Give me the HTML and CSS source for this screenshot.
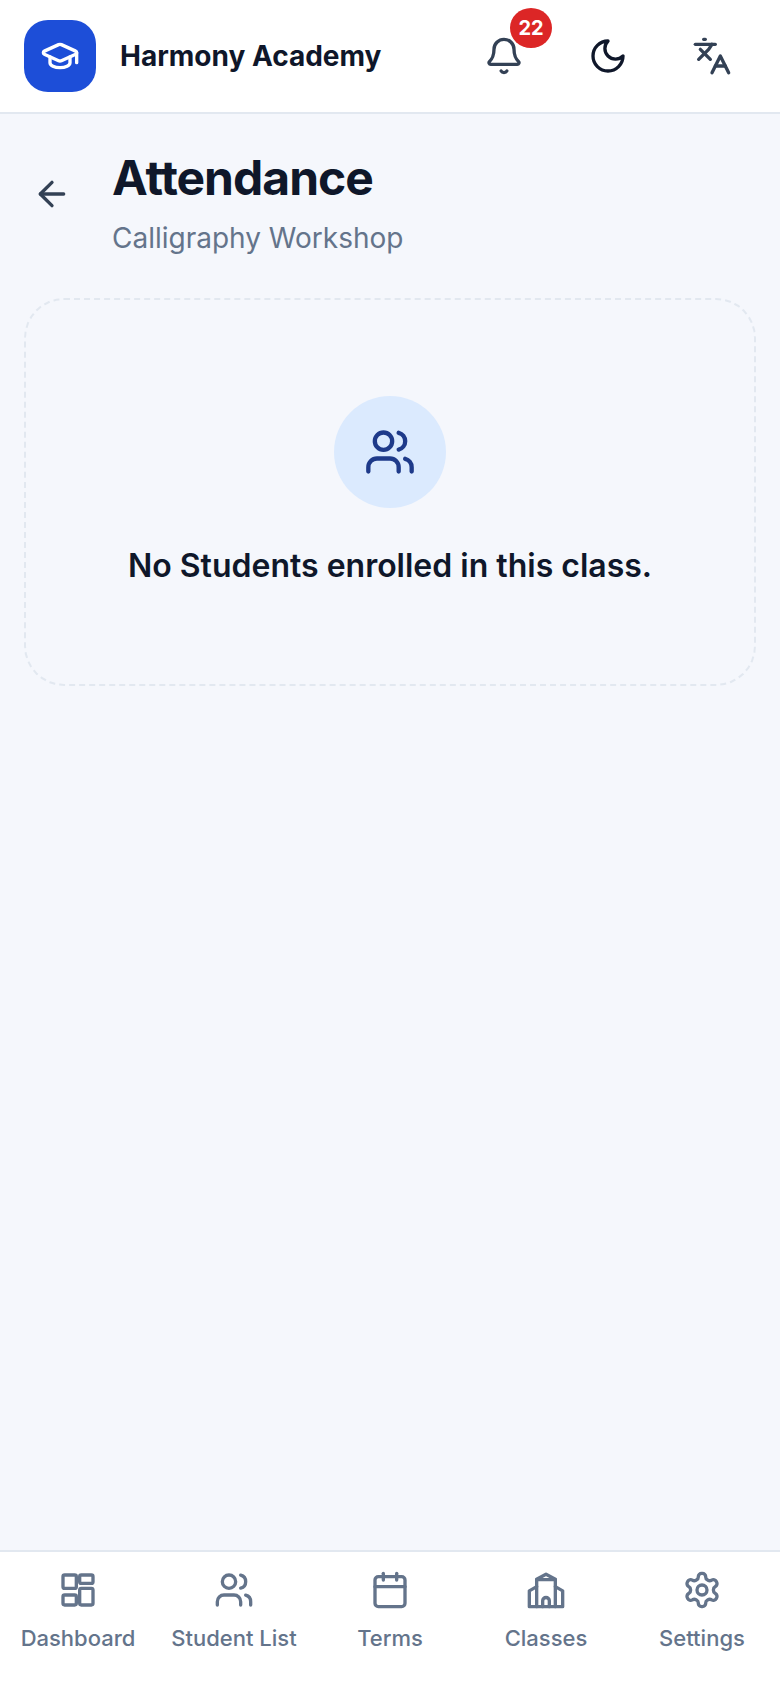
FILE: index.html
```html
<!DOCTYPE html>
<html lang="en">
<head>
<meta charset="utf-8">
<title>Attendance</title>
<link rel="stylesheet" href="styles.css">
</head>
<body>
<div class="app">
  <header class="topbar">
    <div class="brand">
      <div class="logo">
        <svg viewBox="0 0 24 24" width="40" height="40" class="ico" stroke="#fff" stroke-width="2"><path d="M21.42 10.92a1 1 0 0 0-.02-1.84l-8.57-3.9a2 2 0 0 0-1.66 0l-8.57 3.9a1 1 0 0 0 0 1.83l8.57 3.91a2 2 0 0 0 1.66 0z"/><path d="M22 10v6"/><path d="M6 12.5V16a6 3 0 0 0 12 0v-3.5"/></svg>
      </div>
      <span class="brand-name">Harmony Academy</span>
    </div>
    <div class="actions">
      <button class="action">
        <svg viewBox="0 0 24 24" width="40" height="40" class="ico slate" stroke-width="2"><path d="M10.27 21a2 2 0 0 0 3.46 0"/><path d="M3.26 15.33A1 1 0 0 0 4 17h16a1 1 0 0 0 .74-1.67C19.41 13.96 18 12.5 18 8A6 6 0 0 0 6 8c0 4.5-1.41 5.96-2.74 7.33"/></svg>
        <span class="badge">22</span>
      </button>
      <button class="action">
        <svg viewBox="0 0 24 24" width="40" height="40" class="ico dark" stroke-width="2"><path d="M12 3a6 6 0 0 0 9 9 9 9 0 1 1-9-9Z"/></svg>
      </button>
      <button class="action">
        <svg viewBox="0 0 24 24" width="40" height="40" class="ico slate" stroke-width="2"><path d="m5 8 6 6"/><path d="m4 14 6-6 2-3"/><path d="M2 5h12"/><path d="M7 2h1"/><path d="m22 22-5-10-5 10"/><path d="M14 18h6"/></svg>
      </button>
    </div>
  </header>

  <main class="content">
    <div class="page-head">
      <button class="back">
        <svg viewBox="0 0 24 24" width="40" height="40" class="ico slate" stroke-width="2"><path d="m12 19-7-7 7-7"/><path d="M19 12H5"/></svg>
      </button>
      <div class="titles">
        <h1>Attendance</h1>
        <p>Calligraphy Workshop</p>
      </div>
    </div>
    <section class="empty">
      <div class="empty-icon">
        <svg viewBox="0 0 24 24" width="52" height="52" class="ico navy" stroke-width="2"><path d="M16 21v-2a4 4 0 0 0-4-4H6a4 4 0 0 0-4 4v2"/><circle cx="9" cy="7" r="4"/><path d="M16 3.13a4 4 0 0 1 0 7.75"/><path d="M22 21v-2a4 4 0 0 0-3-3.87"/></svg>
      </div>
      <p class="empty-text">No Students enrolled in this class.</p>
    </section>
  </main>

  <nav class="tabs">
    <a class="tab">
      <svg viewBox="0 0 24 24" width="40" height="40" class="ico" stroke-width="2"><rect x="3" y="3" width="8" height="8" rx="1"/><rect x="13" y="3" width="8" height="5" rx="1"/><rect x="13" y="11" width="8" height="10" rx="1"/><rect x="3" y="15" width="8" height="6" rx="1"/></svg>
      <span>Dashboard</span>
    </a>
    <a class="tab">
      <svg viewBox="0 0 24 24" width="40" height="40" class="ico" stroke-width="2"><path d="M16 21v-2a4 4 0 0 0-4-4H6a4 4 0 0 0-4 4v2"/><circle cx="9" cy="7" r="4"/><path d="M16 3.13a4 4 0 0 1 0 7.75"/><path d="M22 21v-2a4 4 0 0 0-3-3.87"/></svg>
      <span>Student List</span>
    </a>
    <a class="tab">
      <svg viewBox="0 0 24 24" width="40" height="40" class="ico" stroke-width="2"><path d="M8 2v4"/><path d="M16 2v4"/><rect x="3" y="4" width="18" height="18" rx="2"/><path d="M3 10h18"/></svg>
      <span>Terms</span>
    </a>
    <a class="tab">
      <svg viewBox="0 0 24 24" width="40" height="40" class="ico" stroke-width="2"><path d="M6.4 22V5.5L12 2.5l5.6 3V22"/><path d="M6.4 5.8h11.2"/><path d="M6.4 10 2 12.5V22h20v-9.5L17.6 10"/><path d="M10 22v-3.5a2 2 0 0 1 4 0V22"/></svg>
      <span>Classes</span>
    </a>
    <a class="tab">
      <svg viewBox="0 0 24 24" width="40" height="40" class="ico" stroke-width="2"><path d="M12.22 2h-.44a2 2 0 0 0-2 2v.18a2 2 0 0 1-1 1.73l-.43.25a2 2 0 0 1-2 0l-.15-.08a2 2 0 0 0-2.73.73l-.22.38a2 2 0 0 0 .73 2.73l.15.1a2 2 0 0 1 1 1.72v.51a2 2 0 0 1-1 1.74l-.15.09a2 2 0 0 0-.73 2.73l.22.38a2 2 0 0 0 2.73.73l.15-.08a2 2 0 0 1 2 0l.43.25a2 2 0 0 1 1 1.73V20a2 2 0 0 0 2 2h.44a2 2 0 0 0 2-2v-.18a2 2 0 0 1 1-1.73l.43-.25a2 2 0 0 1 2 0l.15.08a2 2 0 0 0 2.73-.73l.22-.39a2 2 0 0 0-.73-2.73l-.15-.08a2 2 0 0 1-1-1.74v-.5a2 2 0 0 1 1-1.74l.15-.09a2 2 0 0 0 .73-2.73l-.22-.38a2 2 0 0 0-2.73-.73l-.15.08a2 2 0 0 1-2 0l-.43-.25a2 2 0 0 1-1-1.73V4a2 2 0 0 0-2-2z"/><circle cx="12" cy="12" r="3"/></svg>
      <span>Settings</span>
    </a>
  </nav>
</div>
</body>
</html>
```

FILE: styles.css
```css
* { box-sizing: border-box; }
html, body { margin: 0; height: 100%; }
body {
  font-family: Inter, "Liberation Sans", sans-serif;
  background: #f5f7fc;
  color: #0f172a;
}
.app { display: flex; flex-direction: column; height: 1688px; overflow: hidden; }
.ico { fill: none; stroke-linecap: round; stroke-linejoin: round; display: block; }
.slate { stroke: #334155; }
.dark { stroke: #0f172a; }
.navy { stroke: #1e3a8a; }

.topbar {
  height: 114px;
  flex: none;
  background: #fff;
  border-bottom: 2px solid #e2e8f0;
  display: flex;
  align-items: center;
  justify-content: space-between;
  padding: 0 24px;
}
.brand { display: flex; align-items: center; gap: 24px; }
.logo {
  width: 72px; height: 72px;
  border-radius: 24px;
  background: #1d4ed8;
  display: flex; align-items: center; justify-content: center;
}
.brand-name { font-size: 28px; font-weight: 700; color: #0f172a; }
.actions { display: flex; align-items: center; gap: 24px; margin-right: 4px; }
.action {
  position: relative;
  width: 80px; height: 80px;
  background: none; border: 0; padding: 0;
  display: flex; align-items: center; justify-content: center;
}
.badge {
  position: absolute;
  top: -8px; right: -8px;
  width: 42px; height: 40px;
  border-radius: 50%;
  background: #dc2626;
  color: #fff;
  font-family: Inter, sans-serif;
  font-size: 20px; font-weight: 700;
  display: flex; align-items: center; justify-content: center;
}

.content { flex: 1; padding: 36px 24px 0; }
.page-head { display: flex; align-items: flex-start; gap: 32px; }
.back {
  width: 56px; height: 56px;
  background: none; border: 0; padding: 0;
  margin-top: 16px;
  display: flex; align-items: center; justify-content: center;
}
.titles h1 {
  margin: 0;
  font-size: 48px; line-height: 56px; font-weight: 700;
  letter-spacing: -1px;
  color: #0f172a;
}
.titles p {
  margin: 12px 0 0;
  font-size: 28px; line-height: 40px;
  color: #64748b;
}
.empty {
  margin-top: 40px;
  height: 388px;
  border: 2px dashed #e2e8f0;
  border-radius: 40px;
  display: flex; flex-direction: column; align-items: center;
  padding-top: 96px;
}
.empty-icon {
  width: 112px; height: 112px;
  border-radius: 50%;
  background: #dbeafe;
  display: flex; align-items: center; justify-content: center;
}
.empty-text {
  margin: 34px 0 0;
  font-size: 32px; line-height: 48px; font-weight: 600;
  color: #0f172a;
}

.tabs {
  flex: none;
  height: 138px;
  background: #fff;
  border-top: 2px solid #e2e8f0;
  display: grid;
  grid-template-columns: repeat(5, 1fr);
  padding: 18px 0 0;
}
.tab {
  display: flex; flex-direction: column; align-items: center;
  gap: 12px;
  color: #64748b;
}
.tab .ico { stroke: #64748b; }
.tab span { font-size: 22px; line-height: 32px; font-weight: 500; white-space: nowrap; }
```
